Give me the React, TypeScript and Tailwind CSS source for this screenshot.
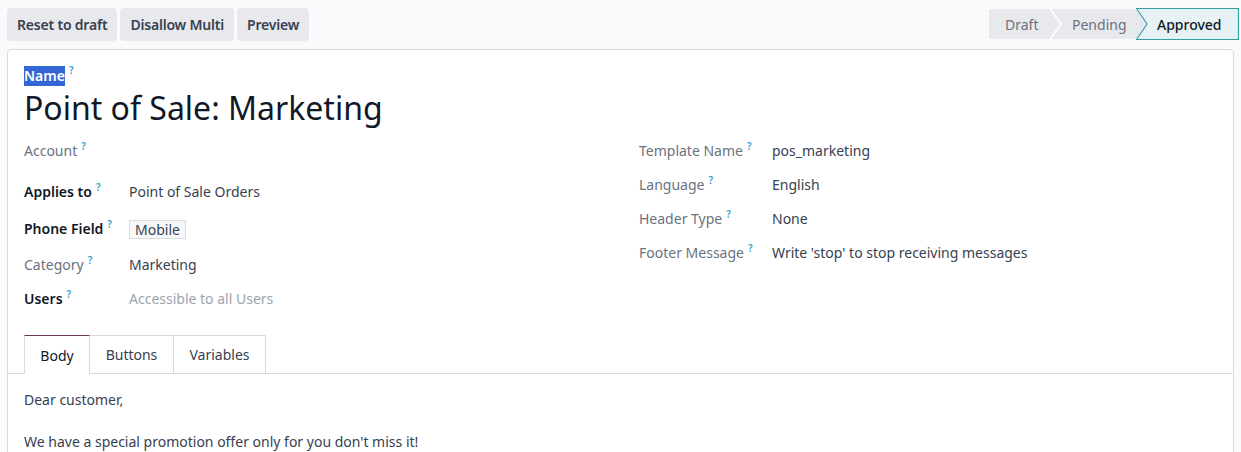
import React from "react";

const font = { fontFamily: '"Noto Sans", "Open Sans", sans-serif' };

function Q() {
  return (
    <span className="relative -top-[6px] ml-[4px] text-[10px] font-semibold leading-none text-[#3aa3c9]">?</span>
  );
}

function Step({
  label,
  width,
  notch,
  active,
  textPad,
}: {
  label: string;
  width: number;
  notch: boolean;
  active?: boolean;
  textPad: string;
}) {
  const d = 11;
  const h = 32;
  const pts = active
    ? ["0.5,0.5", `${width - 0.5},0.5`, `${width - 0.5},${h - 0.5}`, `0.5,${h - 0.5}`, `${d},${h / 2}`].join(" ")
    : [
        "0,0",
        `${width - d},0`,
        `${width},${h / 2}`,
        `${width - d},${h}`,
        `0,${h}`,
        notch ? `${d},${h / 2}` : "0,0",
      ].join(" ");
  return (
    <div className={`relative h-[32px] ${notch ? "-ml-[11px]" : ""}`} style={{ width }}>
      <svg className="absolute inset-0" width={width} height={h}>
        <polygon
          points={pts}
          fill={active ? "#e6f2f3" : "#e7e9ed"}
          stroke={active ? "#2ea0a6" : "#ffffff"}
          strokeWidth={active ? 1.2 : 1.5}
        />
      </svg>
      <span
        className={`relative flex h-full items-center whitespace-nowrap text-[14px] ${textPad} ${
          active ? "font-medium text-[#111827]" : "text-[#6b7280]"
        }`}
      >
        {label}
      </span>
    </div>
  );
}

function Field({
  label,
  value,
  bold,
  labelW,
  muted,
  tag,
}: {
  label: string;
  value?: string;
  bold?: boolean;
  labelW: string;
  muted?: boolean;
  tag?: boolean;
}) {
  return (
    <div className="flex h-[20px] items-center leading-[20px]">
      <div className={`${labelW} text-[14px] ${bold ? "font-semibold text-[#111827]" : "text-[#6b7280]"}`}>
        {label}
        <Q />
      </div>
      {value &&
        (tag ? (
          <span className="border border-[#d8dbe0] bg-[#f7f8fa] px-[5px] text-[14px] leading-[17px] text-[#374151]">
            {value}
          </span>
        ) : (
          <span className={`text-[14px] ${muted ? "text-[#9ca3af]" : "text-[#374151]"}`}>{value}</span>
        ))}
    </div>
  );
}

export default function App() {
  return (
    <div className="h-[452px] w-[1241px] overflow-hidden bg-[#f9fafb]" style={font}>
      <div className="flex items-center justify-between px-[7px] pt-[8px]">
        <div className="flex gap-[3px]">
          {["Reset to draft", "Disallow Multi", "Preview"].map((b) => (
            <button
              key={b}
              className="h-[33px] rounded-[4px] bg-[#e7e9ed] px-[10px] text-[14px] font-semibold tracking-[-0.2px] text-[#374151]"
            >
              {b}
            </button>
          ))}
        </div>
        <div className="-mr-[5px] flex self-start">
          <Step label="Draft" width={73} notch={false} textPad="pl-[17px]" />
          <Step label="Pending" width={97} notch textPad="pl-[22px]" />
          <Step label="Approved" width={103} notch active textPad="pl-[21px]" />
        </div>
      </div>

      <div className="mx-[7px] mt-[8px] h-[420px] rounded-t-[4px] border border-[#d8dadd] bg-white">
        <div className="px-[16px] pt-[16px]">
          <div className="flex items-center">
            <span className="bg-[#3367d6] text-[14px] font-semibold leading-[20px] text-white">Name</span>
            <Q />
          </div>
          <h1 className="mt-[1px] text-[32px] leading-[42px] text-[#111827]">Point of Sale: Marketing</h1>

          <div className="mt-[12px] flex">
            <div className="flex w-[615px] flex-col">
              <Field label="Account" labelW="w-[105px]" />
              <div className="mt-[21px]">
                <Field label="Applies to" value="Point of Sale Orders" bold labelW="w-[105px]" />
              </div>
              <div className="mt-[17px]">
                <Field label="Phone Field" value="Mobile" bold tag labelW="w-[105px]" />
              </div>
              <div className="mt-[16px]">
                <Field label="Category" value="Marketing" labelW="w-[105px]" />
              </div>
              <div className="mt-[14px]">
                <Field label="Users" value="Accessible to all Users" bold muted labelW="w-[105px]" />
              </div>
            </div>
            <div className="flex flex-col gap-[14px]">
              <Field label="Template Name" value="pos_marketing" labelW="w-[133px]" />
              <Field label="Language" value="English" labelW="w-[133px]" />
              <Field label="Header Type" value="None" labelW="w-[133px]" />
              <Field label="Footer Message" value="Write 'stop' to stop receiving messages" labelW="w-[133px]" />
            </div>
          </div>
        </div>

        <div className="mt-[26px] flex border-b border-[#d8dadd] pl-[16px]">
          <div className="-mb-px flex h-[39px] w-[66px] items-center justify-center border border-b-0 border-[#d8dadd] border-t-[#6b3a5a] bg-white text-[14px] text-[#111827]">
            Body
          </div>
          <div className="flex h-[38px] w-[84px] items-center justify-center border-r border-t border-[#d8dadd] text-[14px] text-[#374151]">
            Buttons
          </div>
          <div className="flex h-[38px] w-[92px] items-center justify-center border-r border-t border-[#d8dadd] text-[14px] text-[#374151]">
            Variables
          </div>
        </div>

        <div className="px-[16px] pt-[16px] text-[14px] leading-[20px] text-[#374151]">
          <p>Dear customer,</p>
          <p className="mt-[22px]">We have a special promotion offer only for you don't miss it!</p>
        </div>
      </div>
    </div>
  );
}
